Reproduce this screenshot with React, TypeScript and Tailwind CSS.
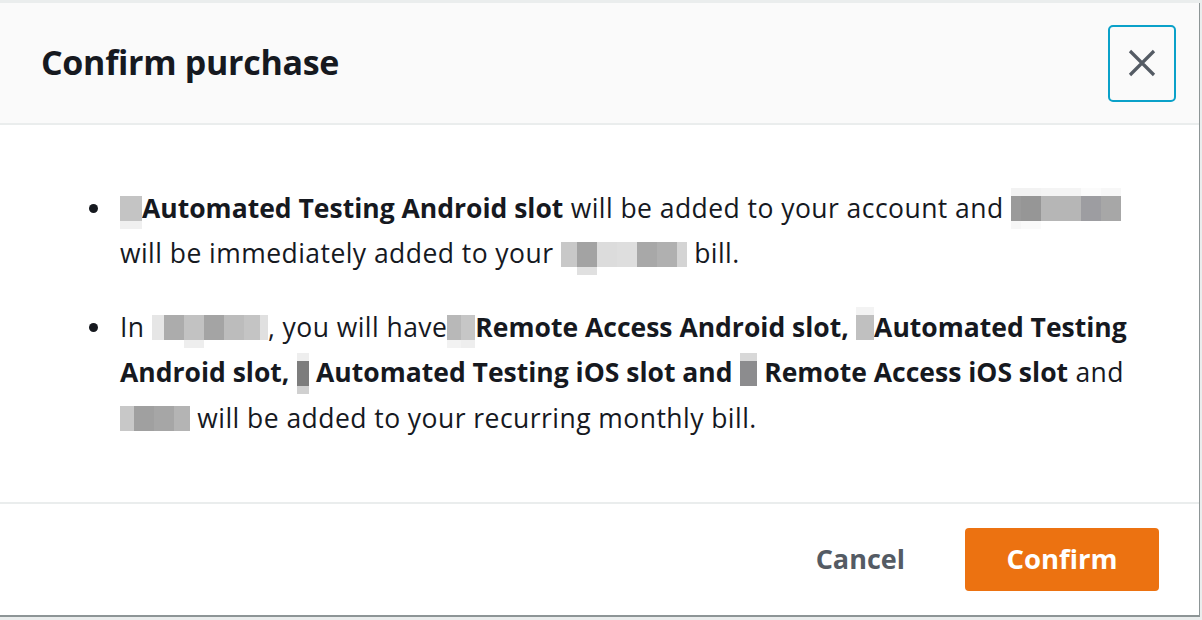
import React from "react";

type Cell = { w: number; c: string; top?: string; bot?: string };

function Mosaic({ cells, h = 25 }: { cells: Cell[]; h?: number }) {
  return (
    <span className="inline-flex align-middle relative -top-[2px] tracking-normal">
      {cells.map((cell, i) => (
        <span key={i} className="flex flex-col">
          <span style={{ width: cell.w, height: 8, background: cell.top ?? "transparent" }} />
          <span style={{ width: cell.w, height: h, background: cell.c }} />
          <span style={{ width: cell.w, height: 8, background: cell.bot ?? "transparent" }} />
        </span>
      ))}
    </span>
  );
}

function Dot() {
  return <span className="w-[9px] h-[9px] rounded-full bg-[#16191f] mt-[18px] shrink-0" />;
}

function B({ children }: { children: React.ReactNode }) {
  return <b className="font-bold tracking-normal">{children}</b>;
}

export default function App() {
  const font = { fontFamily: '"Open Sans", "Noto Sans", Arial, sans-serif' };
  return (
    <div className="w-[1202px] h-[620px] bg-[#eaeded] pt-[3px] overflow-hidden" style={font}>
      <div className="w-[1200px] h-[614px] bg-white border-r-[1px] border-b-[2px] border-[#8d9596] flex flex-col">
        {/* header */}
        <div className="h-[122px] bg-[#fafafa] border-b-[2px] border-[#eaeded] flex items-center justify-between pl-[41px] pr-[23px]">
          <h1 className="text-[34px] font-bold text-[#16191f] tracking-[-0.3px] -mt-[1px]">Confirm purchase</h1>
          <button className="w-[68px] h-[77px] border-[2px] border-[#0aa1c9] rounded-[5px] flex items-center justify-center">
            <svg width="28" height="28" viewBox="0 0 28 28">
              <path d="M2 2 L26 26 M26 2 L2 26" stroke="#545b64" strokeWidth="3.2" fill="none" />
            </svg>
          </button>
        </div>
        {/* body */}
        <div className="flex-1 pt-[61px] pl-[89px] text-[26.5px] leading-[44px] tracking-[0.45px] text-[#16191f]">
          <div className="flex gap-[22px]">
            <Dot />
            <div className="whitespace-nowrap">
              <Mosaic cells={[{ w: 22, c: "#c4c4c4", bot: "#f0f0f0" }]} />
              <B>Automated Testing Android slot</B> will be added to your account and{" "}
              <Mosaic
                cells={[
                  { w: 10, c: "#9a9a9a", top: "#f2f2f2", bot: "#f6f6f6" },
                  { w: 20, c: "#969696", top: "#f2f2f2", bot: "#fafafa" },
                  { w: 40, c: "#b6b6b6", top: "#f4f4f4" },
                  { w: 20, c: "#9d9da1", top: "#fbfbfb" },
                  { w: 20, c: "#a7a7a7", top: "#f7f7f7" },
                ]}
              />
              <br />
              will be immediately added to your{" "}
              <Mosaic
                cells={[
                  { w: 16, c: "#c8c8c8" },
                  { w: 20, c: "#a3a3a3", bot: "#e0e0e0" },
                  { w: 20, c: "#dcdcdc" },
                  { w: 20, c: "#dedede" },
                  { w: 20, c: "#a8a8a8" },
                  { w: 20, c: "#b0b0b0" },
                  { w: 10, c: "#d4d4d4" },
                ]}
              />{" "}
              bill.
            </div>
          </div>
          <div className="flex gap-[22px] mt-[28px]">
            <Dot />
            <div className="whitespace-nowrap">
              In{" "}
              <Mosaic
                cells={[
                  { w: 12, c: "#e6e6e6" },
                  { w: 20, c: "#acacac" },
                  { w: 20, c: "#c2c2c2", bot: "#eeeeee" },
                  { w: 20, c: "#a4a4a4" },
                  { w: 20, c: "#bcbcbc" },
                  { w: 16, c: "#c4c4c4" },
                  { w: 8, c: "#e0e0e0" },
                ]}
              />
              , you will have
              <Mosaic cells={[{ w: 14, c: "#b8b8b8", bot: "#f2f2f2" }, { w: 14, c: "#c6c6c6", bot: "#eeeeee" }]} />
              <B>Remote Access Android slot,</B>{" "}
              <Mosaic cells={[{ w: 18, c: "#c0c0c0", top: "#f3f3f3" }]} />
              <B>Automated Testing</B>
              <br />
              <B>Android slot,</B>{" "}
              <Mosaic cells={[{ w: 12, c: "#7d7d7d", top: "#eeeeee", bot: "#d0d0d0" }]} />{" "}
              <B>Automated Testing iOS slot and</B>{" "}
              <Mosaic cells={[{ w: 17, c: "#8c8c8e", top: "#d8d8d8" }]} />{" "}
              <B>Remote Access iOS slot</B> and
              <br />
              <Mosaic
                cells={[
                  { w: 14, c: "#c8c8c8" },
                  { w: 20, c: "#a0a0a0" },
                  { w: 20, c: "#a6a6a6" },
                  { w: 16, c: "#b4b4b4" },
                ]}
              />{" "}
              will be added to your recurring monthly bill.
            </div>
          </div>
        </div>
        {/* footer */}
        <div className="h-[113px] border-t-[2px] border-[#eaeded] flex items-center justify-end pr-[40px] gap-[60px]">
          <button className="text-[27px] font-bold text-[#545b64] -mt-[1px]">Cancel</button>
          <button className="w-[194px] h-[63px] bg-[#ec7211] rounded-[4px] text-[27.5px] font-bold text-white -mt-[1px]">
            Confirm
          </button>
        </div>
      </div>
    </div>
  );
}
